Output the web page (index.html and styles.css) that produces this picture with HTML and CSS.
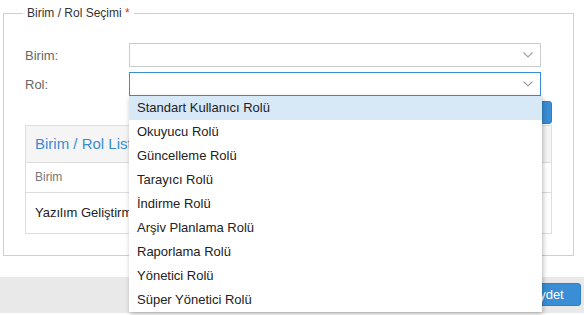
FILE: index.html
```html
<!DOCTYPE html>
<html lang="tr">
<head>
<meta charset="utf-8">
<title>Birim / Rol Seçimi</title>
<link rel="stylesheet" href="styles.css">
</head>
<body>
<div class="page">
  <fieldset class="box">
    <legend class="box-legend">Birim / Rol Seçimi <span class="req">*</span></legend>
    <div class="box-body">
      <div class="form-row">
        <label class="form-label">Birim:</label>
        <div class="select">
          <svg class="chev" width="10" height="6" viewBox="0 0 10 6"><path d="M0.5 0.5 L5 5 L9.5 0.5" fill="none" stroke="#a0a0a0" stroke-width="1.1"/></svg>
        </div>
      </div>
      <div class="form-row">
        <label class="form-label">Rol:</label>
        <div class="select select-open">
          <svg class="chev" width="10" height="6" viewBox="0 0 10 6"><path d="M0.5 0.5 L5 5 L9.5 0.5" fill="none" stroke="#a0a0a0" stroke-width="1.1"/></svg>
          <ul class="dropdown">
            <li class="opt opt-active">Standart Kullanıcı Rolü</li>
            <li class="opt">Okuyucu Rolü</li>
            <li class="opt">Güncelleme Rolü</li>
            <li class="opt">Tarayıcı Rolü</li>
            <li class="opt">İndirme Rolü</li>
            <li class="opt">Arşiv Planlama Rolü</li>
            <li class="opt">Raporlama Rolü</li>
            <li class="opt">Yönetici Rolü</li>
            <li class="opt">Süper Yönetici Rolü</li>
          </ul>
        </div>
      </div>
      <div class="btn-row">
        <button class="btn">Ekle</button>
      </div>
      <div class="panel">
        <div class="panel-head">Birim / Rol Listesi</div>
        <div class="tr th">Birim</div>
        <div class="tr td">Yazılım Geliştirme Birimi</div>
      </div>
    </div>
  </fieldset>
  <div class="footer">
    <button class="btn btn-save">Kaydet</button>
  </div>
</div>
</body>
</html>
```
FILE: styles.css
```css
* { box-sizing: border-box; }
html, body { margin: 0; padding: 0; background: #fff; }
body {
  font-family: "Liberation Sans", Arial, sans-serif;
  font-size: 13px;
  color: #333;
  width: 584px;
  height: 315px;
  overflow: hidden;
}
.page { display: flex; flex-direction: column; }
.box {
  margin: 6px 0 0 3px;
  width: 571px;
  padding: 0;
  border: 1px solid #cfcfcf;
  min-width: 0;
}
.box-legend {
  margin-left: 19px;
  padding: 0 4px;
  font-size: 12px;
  line-height: 14px;
  color: #333;
}
.req { color: #e03030; }
.box-body {
  padding: 23px 0 21px 21px;
  display: flex;
  flex-direction: column;
}
.form-row {
  display: flex;
  align-items: center;
  height: 24px;
  margin-bottom: 5px;
}
.form-label {
  width: 104px;
  color: #666;
  font-size: 13px;
}
.select {
  position: relative;
  width: 412px;
  height: 24px;
  border: 1px solid #cccccc;
  background: #fff;
}
.select-open { border-color: #3b8dd4; }
.chev { position: absolute; right: 7px; top: 8px; }
.dropdown {
  position: absolute;
  left: -1px;
  top: 23px;
  width: 413px;
  margin: 0;
  padding: 0;
  list-style: none;
  background: #fff;
  box-shadow: 1px 2px 5px rgba(0,0,0,0.28);
  z-index: 5;
}
.opt {
  height: 24px;
  line-height: 24px;
  padding-left: 8px;
  font-size: 13px;
  color: #222;
}
.opt-active { background: #d7e8f6; }
.btn-row {
  display: flex;
  justify-content: flex-end;
  width: 527px;
}
.btn {
  font-family: "Liberation Sans", Arial, sans-serif;
  font-size: 13px;
  color: #fff;
  background: #3a8ed5;
  border: 1px solid #2f7fc4;
  border-radius: 3px;
  height: 23px;
  width: 70px;
  padding: 0;
}
.panel {
  width: 527px;
  margin-top: 1px;
  border: 1px solid #dedede;
}
.panel-head {
  height: 37px;
  line-height: 36px;
  background: #f5f5f5;
  border-bottom: 1px solid #dcdcdc;
  padding-left: 9px;
  font-size: 15px;
  color: #3a8cd2;
}
.tr {
  padding-left: 9px;
  border-bottom: 1px solid #dcdcdc;
}
.tr:last-child { border-bottom: 0; }
.th { height: 30px; line-height: 29px; font-size: 12px; color: #777; }
.td { height: 40px; line-height: 40px; font-size: 13px; color: #222; }
.footer {
  margin-top: 21px;
  height: 36px;
  background: #e9e9e9;
  display: flex;
  justify-content: flex-end;
  align-items: flex-start;
  padding: 6px 3px 0 0;
}
.btn-save { width: 75px; height: 23px; }
```
